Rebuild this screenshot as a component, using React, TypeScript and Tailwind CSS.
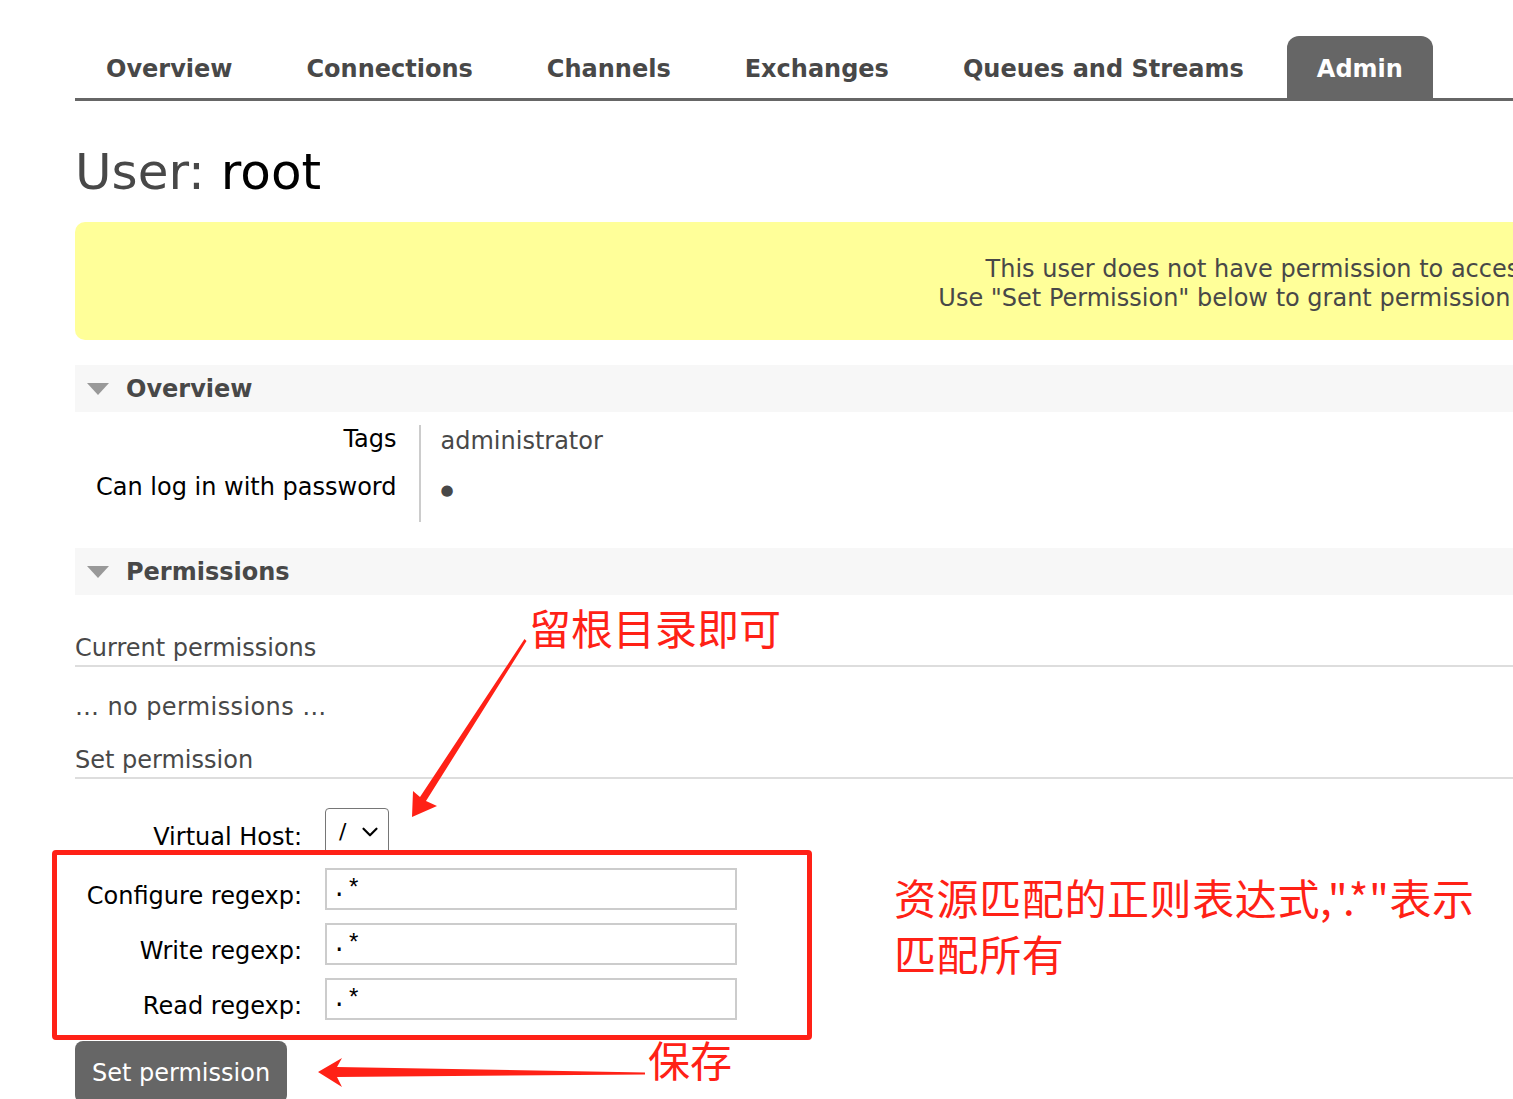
import { ChevronDown } from "lucide-react";

const TABS = ["Overview", "Connections", "Channels", "Exchanges", "Queues and Streams", "Admin"];
const ACTIVE = "Admin";

const RED = "#ff2116";

function SectionHeader({ title }: { title: string }) {
  return (
    <div className="flex h-[47px] items-center bg-[#f7f7f7]">
      <svg width="22" height="12" viewBox="0 0 22 12" className="ml-[12px] mr-[17px]">
        <polygon points="0,0 22,0 11,12" fill="#999" />
      </svg>
      <span className="text-[24px] font-bold text-[#484848]">{title}</span>
    </div>
  );
}

function RegexpInput() {
  return (
    <input
      defaultValue=".*"
      className="h-[42px] w-[412px] border-2 border-[#ccc] pl-[5px] font-['Liberation_Mono',monospace] text-[24px] text-black outline-none"
    />
  );
}

export default function App() {
  return (
    <div className="relative h-screen w-screen overflow-hidden bg-white font-['DejaVu_Sans',sans-serif] text-[#484848]">
      <div className="w-[2700px] pl-[75px] pt-[36px]">
        <div className="w-[2583px]">
          {/* Menu */}
          <nav className="flex border-b-[3px] border-[#666]">
            {TABS.map((t) => (
              <div
                key={t}
                className={
                  t === ACTIVE
                    ? "mr-[12px] flex h-[62px] items-center rounded-t-[12px] bg-[#666] px-[30px] pt-[4px] text-[24px] font-bold text-white"
                    : "mr-[12px] flex h-[62px] items-center px-[31px] pt-[4px] text-[24px] font-bold text-[#484848]"
                }
              >
                {t}
              </div>
            ))}
          </nav>

          <h1 className="mt-[42px] text-[50px] font-normal leading-[58px] text-[#484848]">
            User: <span className="text-black">root</span>
          </h1>

          <p className="mt-[21px] rounded-[10px] bg-[#ffff99] pb-[27px] pt-[33px] text-center text-[24px] leading-[29px]">
            This user does not have permission to access any virtual hosts.
            <br />
            Use "Set Permission" below to grant permission to access virtual hosts.
          </p>

          {/* Overview */}
          <div className="mt-[25px]">
            <SectionHeader title="Overview" />
            <div className="mt-[13px] grid grid-cols-[auto_1fr] text-[24px] leading-[28px]">
              <div className="border-r-2 border-[#ccc] pl-[21px] pr-[22px] text-right text-black">
                <div className="h-[48px]">Tags</div>
                <div className="h-[49px]">Can log in with password</div>
              </div>
              <div className="pl-[20px]">
                <div className="h-[48px] pt-[2px]">administrator</div>
                <div className="h-[49px] pt-[3px] text-[15px]">●</div>
              </div>
            </div>
          </div>

          {/* Permissions */}
          <div className="mt-[26px]">
            <SectionHeader title="Permissions" />
            <h3 className="mt-[39px] border-b-2 border-[#ddd] pb-[3px] text-[24px] font-normal leading-[28px]">
              Current permissions
            </h3>
            <p className="mt-[26px] text-[24px] leading-[28px] tracking-[0.4px]">… no permissions …</p>
            <h3 className="mt-[25px] border-b-2 border-[#ddd] pb-[3px] text-[24px] font-normal leading-[28px]">
              Set permission
            </h3>

            <div className="mt-[29px] grid grid-cols-[227px_auto] gap-x-[23px] gap-y-[13px] text-[24px] leading-[28px] text-black">
              <label className="whitespace-nowrap pt-[15px] text-right">Virtual Host:</label>
              <div className="flex h-[47px] w-[64px] items-center justify-between rounded-[4px] border-[1.5px] border-[#767676] pl-[13px] pr-[5px] text-[22px]">
                <span>/</span>
                <ChevronDown size={26} strokeWidth={2} />
              </div>

              <label className="whitespace-nowrap pt-[14px] text-right">Configure regexp:</label>
              <RegexpInput />
              <label className="whitespace-nowrap pt-[14px] text-right">Write regexp:</label>
              <RegexpInput />
              <label className="whitespace-nowrap pt-[14px] text-right">Read regexp:</label>
              <RegexpInput />
            </div>

            <button className="mt-[21px] h-[62px] w-[212px] rounded-[8px] bg-[#666] pl-[17px] pt-[2px] text-left text-[24px] text-white">
              Set permission
            </button>
          </div>
        </div>
      </div>

      {/* Annotations */}
      <div className="pointer-events-none absolute left-[52px] top-[850px] h-[190px] w-[760px] rounded-[4px] border-[5px] border-[#ff2116]" />
      <svg className="pointer-events-none absolute left-0 top-0" width="1513" height="1099">
        <polygon
          points="524.5,639 526.5,641 426,801 437,806 412,817 413,791 420,797"
          fill={RED}
        />
        <polygon
          points="645,1072.5 645,1074.5 337,1077 342,1087 318,1072 342,1058 337,1067"
          fill={RED}
        />
      </svg>
      <div className="pointer-events-none absolute left-[529px] top-[604px] font-['Noto_Sans_CJK_SC',sans-serif] text-[42px] leading-[46px] text-[#ff2116]">
        留根目录即可
      </div>
      <div className="pointer-events-none absolute left-[894px] top-[869px] whitespace-nowrap font-['Noto_Sans_CJK_SC',sans-serif] text-[42px] leading-[56px] tracking-[0.6px] text-[#ff2116]">
        资源匹配的正则表达式,".*"表示
        <br />
        匹配所有
      </div>
      <div className="pointer-events-none absolute left-[648px] top-[1036px] font-['Noto_Sans_CJK_SC',sans-serif] text-[42px] leading-[46px] text-[#ff2116]">
        保存
      </div>
    </div>
  );
}
